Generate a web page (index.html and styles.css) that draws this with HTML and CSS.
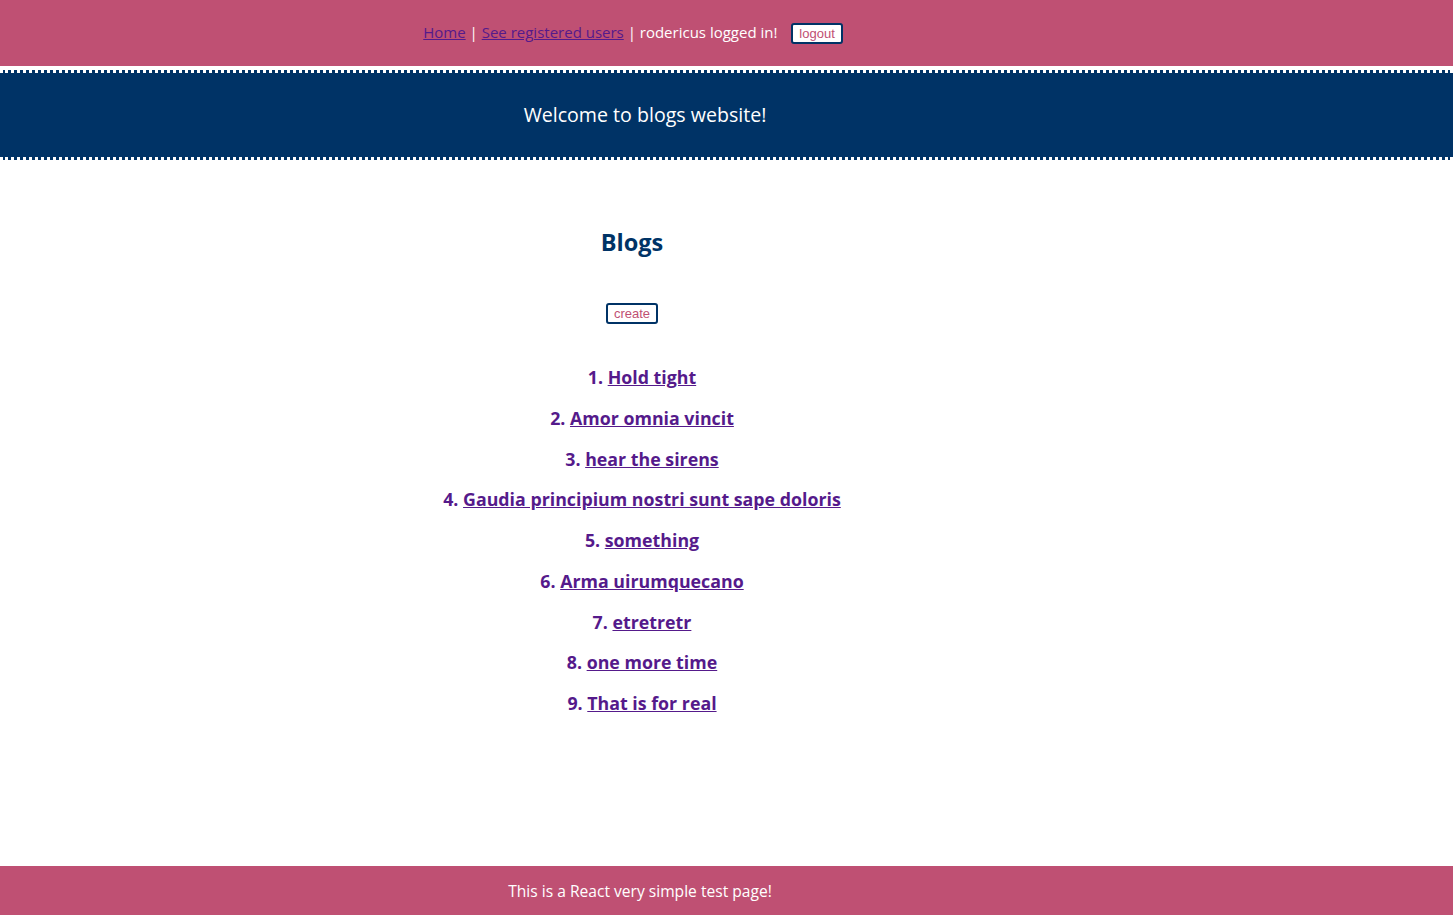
FILE: index.html
```html
<!DOCTYPE html>
<html>
<head>
<meta charset="utf-8">
<link rel="stylesheet" href="styles.css">
</head>
<body>
<div class="nav">
  <div class="nav-inner">
    <a href="#">Home</a> | <a href="#">See registered users</a> | rodericus logged in!
    <button class="btn">logout</button>
  </div>
</div>
<div class="header">
  <div class="header-inner">Welcome to blogs website!</div>
</div>
<div class="main">
  <h2 class="title">Blogs</h2>
  <div class="create-row"><button class="btn">create</button></div>
  <ul class="blogs">
    <li>1. <a href="#">Hold tight</a></li>
    <li>2. <a href="#">Amor omnia vincit</a></li>
    <li>3. <a href="#">hear the sirens</a></li>
    <li>4. <a href="#">Gaudia principium nostri sunt sape doloris</a></li>
    <li>5. <a href="#">something</a></li>
    <li>6. <a href="#">Arma uirumquecano</a></li>
    <li>7. <a href="#">etretretr</a></li>
    <li>8. <a href="#">one more time</a></li>
    <li>9. <a href="#">That is for real</a></li>
  </ul>
</div>
<div class="footer">
  <div class="footer-inner">This is a React very simple test page!</div>
</div>
</body>
</html>
```
FILE: styles.css
```css
html, body {
  margin: 0;
  padding: 0;
}
body {
  font-family: "Open Sans", "DejaVu Sans", sans-serif;
  background: #ffffff;
  min-height: 915px;
  position: relative;
}
.nav {
  background: #bf5073;
  height: 66px;
  display: flex;
  align-items: center;
  margin-bottom: 4px;
}
.nav-inner {
  width: 1266px;
  text-align: center;
  color: #ffffff;
  font-size: 15px;
  line-height: 20px;
  margin-top: 0;
}
.nav a {
  color: #551a8b;
}
.btn {
  font-family: "Liberation Sans", Arial, sans-serif;
  font-size: 13px;
  color: #bf5073;
  background: #ffffff;
  border: 2px solid #003366;
  border-radius: 3px;
  padding: 1px 6px;
  margin-left: 10px;
  line-height: 15px;
}
.header {
  background: #003366;
  border-top: 3px dotted #ffffff;
  border-bottom: 3px dotted #ffffff;
  height: 84px;
  display: flex;
  align-items: center;
}
.header-inner {
  width: 1290px;
  text-align: center;
  color: #ffffff;
  font-size: 19.6px;
  margin-top: -2px;
}
.main {
  width: 1284px;
  text-align: center;
  padding-top: 67px;
}
.title {
  margin: 0;
  width: 1264px;
  color: #003366;
  font-size: 23.5px;
  font-weight: bold;
  line-height: 30px;
}
.create-row {
  width: 1264px;
  margin-top: 44px;
}
.create-row .btn {
  margin-left: 0;
}
.blogs {
  list-style: none;
  margin: 39px 0 0 0;
  padding: 0;
  display: flex;
  flex-direction: column;
  gap: 12.75px;
}
.blogs li {
  color: #551a8b;
  font-size: 17.8px;
  font-weight: bold;
  line-height: 28px;
}
.blogs a {
  color: #551a8b;
}
.footer {
  position: absolute;
  left: 0;
  right: 0;
  bottom: 0;
  height: 49px;
  background: #bf5073;
  display: flex;
  align-items: center;
}
.footer-inner {
  width: 1280px;
  text-align: center;
  color: #ffffff;
  font-size: 15.6px;
}
```
